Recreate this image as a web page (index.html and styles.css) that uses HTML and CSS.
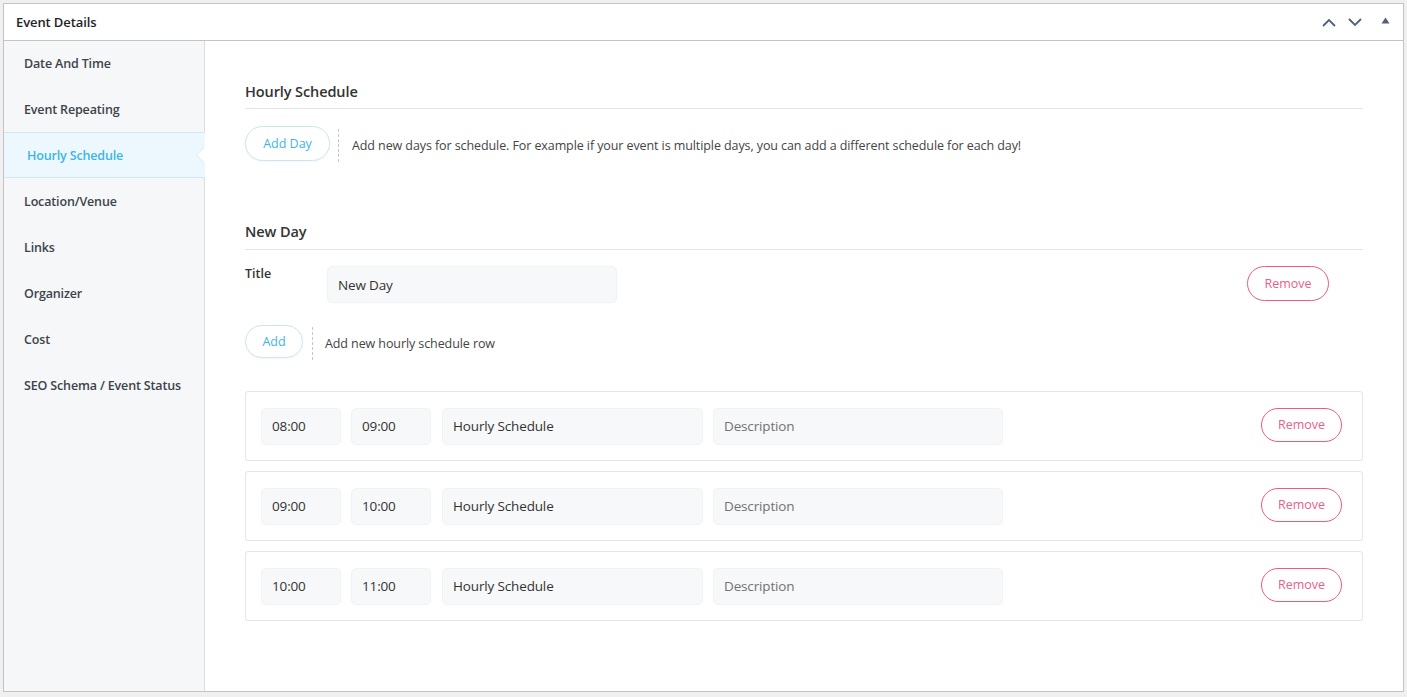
FILE: index.html
```html
<!DOCTYPE html>
<html>
<head>
<meta charset="utf-8">
<link rel="stylesheet" href="styles.css">
</head>
<body>
<div class="postbox">
  <div class="postbox-header">
    <h2 class="postbox-title">Event Details</h2>
    <div class="handle-actions">
      <svg class="hicon" width="14" height="9" viewBox="0 0 14 9"><path d="M1 8 L7 2 L13 8" fill="none" stroke="#50607a" stroke-width="1.8"/></svg>
      <svg class="hicon" width="14" height="9" viewBox="0 0 14 9"><path d="M1 1 L7 7 L13 1" fill="none" stroke="#50607a" stroke-width="1.8"/></svg>
      <svg class="hicon tri" width="9" height="7" viewBox="0 0 9 7"><path d="M0.5 6.5 L4.5 0.5 L8.5 6.5 Z" fill="#50607a"/></svg>
    </div>
  </div>
  <div class="postbox-body">
    <ul class="side-menu">
      <li class="side-item">Date And Time</li>
      <li class="side-item">Event Repeating</li>
      <li class="side-item active">Hourly Schedule</li>
      <li class="side-item">Location/Venue</li>
      <li class="side-item">Links</li>
      <li class="side-item">Organizer</li>
      <li class="side-item">Cost</li>
      <li class="side-item">SEO Schema / Event Status</li>
    </ul>
    <div class="content">
      <h4 class="sec-title">Hourly Schedule</h4>
      <div class="action-row">
        <button class="pill pill-blue btn-addday">Add Day</button>
        <span class="hint">Add new days for schedule. For example if your event is multiple days, you can add a different schedule for each day!</span>
      </div>

      <h4 class="sec-title sec-newday">New Day</h4>
      <div class="title-row">
        <label class="field-label">Title</label>
        <div class="input input-title">New Day</div>
        <button class="pill pill-red btn-remove-day">Remove</button>
      </div>
      <div class="action-row action-add">
        <button class="pill pill-blue btn-add">Add</button>
        <span class="hint">Add new hourly schedule row</span>
      </div>

      <div class="rows">
        <div class="sched-row">
          <div class="input w-time">08:00</div>
          <div class="input w-time">09:00</div>
          <div class="input w-title">Hourly Schedule</div>
          <div class="input w-desc placeholder">Description</div>
          <button class="pill pill-red btn-remove">Remove</button>
        </div>
        <div class="sched-row">
          <div class="input w-time">09:00</div>
          <div class="input w-time">10:00</div>
          <div class="input w-title">Hourly Schedule</div>
          <div class="input w-desc placeholder">Description</div>
          <button class="pill pill-red btn-remove">Remove</button>
        </div>
        <div class="sched-row">
          <div class="input w-time">10:00</div>
          <div class="input w-time">11:00</div>
          <div class="input w-title">Hourly Schedule</div>
          <div class="input w-desc placeholder">Description</div>
          <button class="pill pill-red btn-remove">Remove</button>
        </div>
      </div>
    </div>
  </div>
</div>
</body>
</html>
```

FILE: styles.css
```css
* { box-sizing: border-box; }
html, body { margin: 0; padding: 0; }
body {
  background: #f0f0f1;
  font-family: "Open Sans", "Noto Sans", sans-serif;
  color: #3c434a;
  padding: 3px;
}
.postbox {
  background: #fff;
  border: 1px solid #c3c4c7;
  height: 689px;
  display: flex;
  flex-direction: column;
}
.postbox-header {
  height: 37px;
  border-bottom: 1px solid #c3c4c7;
  display: flex;
  align-items: center;
  justify-content: space-between;
  padding: 0 13px 0 12px;
  flex: none;
}
.postbox-title {
  margin: 0;
  font-size: 13px;
  font-weight: 600;
  color: #1d2327;
  letter-spacing: -0.1px;
}
.handle-actions {
  display: flex;
  align-items: center;
  gap: 12px;
}
.hicon { display: block; }
.tri { margin-left: 7px; margin-top: -3px; }

.postbox-body {
  flex: 1;
  display: flex;
  min-height: 0;
}
.side-menu {
  list-style: none;
  margin: 0;
  padding: 0;
  width: 201px;
  flex: none;
  background: #f6f7f9;
  border-right: 1px solid #dcdcde;
}
.side-item {
  height: 46px;
  display: flex;
  align-items: center;
  padding-left: 20px;
  padding-bottom: 2px;
  font-size: 12.5px;
  font-weight: 600;
  color: #3c434a;
  letter-spacing: -0.15px;
  position: relative;
}
.side-item.active {
  background: #ecf8fd;
  color: #3db5e6;
  border-top: 1px solid #cfe8f3;
  border-bottom: 1px solid #cfe8f3;
  padding-left: 23px;
  padding-bottom: 0;
  margin-top: -1px;
  margin-bottom: 1px;
  margin-right: -1px;
}
.side-item.active::after {
  content: "";
  position: absolute;
  right: 0;
  top: 14px;
  width: 0;
  height: 0;
  border-top: 8px solid transparent;
  border-bottom: 8px solid transparent;
  border-right: 8px solid #fff;
  filter: drop-shadow(-1px 0 0 #d6e9f1);
}

.content {
  flex: 1;
  padding: 41px 40px 0 40px;
}
.sec-title {
  margin: 0;
  font-size: 14.5px;
  font-weight: 600;
  color: #333;
  line-height: 20px;
  padding-bottom: 6px;
  border-bottom: 1px solid #e5e5e5;
  letter-spacing: -0.1px;
}
.sec-newday { margin-top: 60px; padding-bottom: 7px; }

.action-row {
  display: flex;
  align-items: center;
  margin-top: 16px;
}
.pill {
  font-family: inherit;
  background: #fff;
  border-radius: 20px;
  font-size: 12.5px;
  cursor: pointer;
  padding: 0;
}
.pill-blue {
  border: 1px solid #cde5ef;
  color: #3db5e6;
  box-shadow: 0 1px 3px rgba(0, 0, 0, 0.04);
}
.pill-red {
  border: 1px solid #ea5b80;
  color: #e9608a;
}
.btn-addday { width: 85px; height: 35px; }
.btn-add { width: 58px; height: 33px; }
.hint {
  font-size: 12.5px;
  color: #444;
  border-left: 1px dashed #c7c7c7;
  margin-left: 8px;
  padding-left: 13px;
  line-height: 33px;
  margin-top: 4px;
  letter-spacing: -0.09px;
}
.action-add { margin-top: 20px; }
.action-add .hint { margin-left: 9px; padding-left: 12px; margin-top: 4px; }

.title-row {
  display: flex;
  align-items: flex-start;
  margin-top: 16px;
}
.field-label {
  width: 82px;
  font-size: 12.5px;
  font-weight: 600;
  color: #333;
  line-height: 14px;
  padding-top: 1px;
}
.input {
  background: #f7f8f9;
  border: 1px solid #f1f2f3;
  border-radius: 5px;
  height: 37px;
  display: flex;
  align-items: center;
  padding-left: 10px;
  font-size: 13.5px;
  color: #333;
  letter-spacing: -0.15px;
}
.placeholder { color: #727272; }
.input-title { width: 290px; }
.btn-remove-day {
  width: 82px;
  height: 35px;
  margin-left: auto;
  margin-right: 34px;
}

.rows {
  margin-top: 31px;
  display: flex;
  flex-direction: column;
  gap: 10px;
}
.sched-row {
  height: 70px;
  border: 1px solid #e5e5e5;
  border-radius: 3px;
  display: flex;
  align-items: center;
  padding: 0 20px 0 15px;
}
.sched-row .input { margin-right: 10px; }
.w-time { width: 80px; }
.w-title { width: 261px; margin-left: 1px; }
.w-desc { width: 290px; }
.btn-remove {
  width: 81px;
  height: 34px;
  margin-left: auto;
  margin-top: -3px;
}
```
